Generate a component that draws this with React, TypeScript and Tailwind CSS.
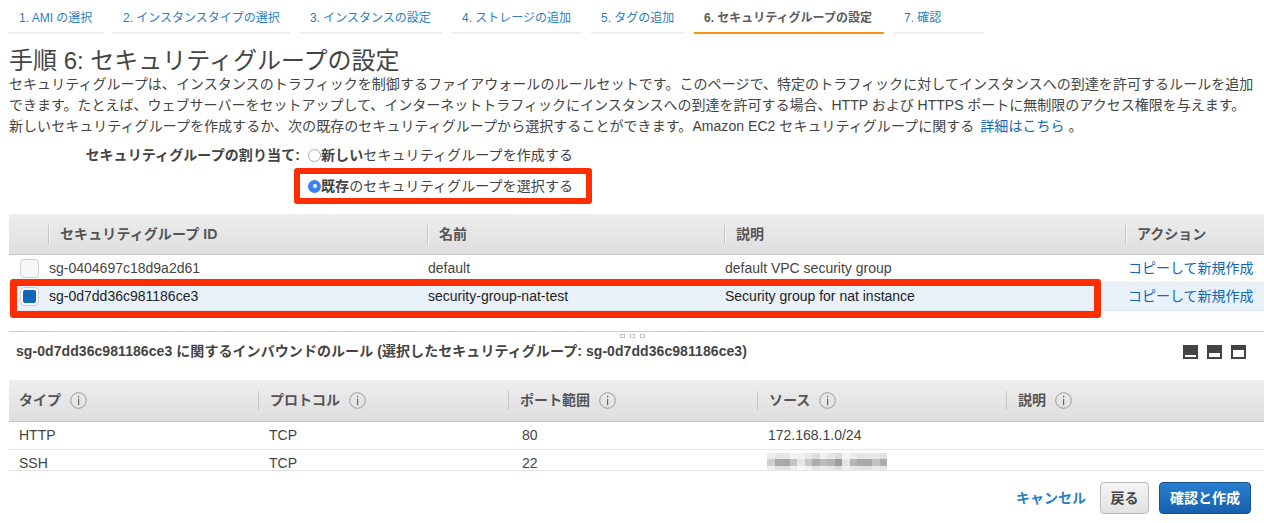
const font = "font-['Liberation_Sans','Noto_Sans_CJK_JP',sans-serif]";

const steps = [
  { label: '1. AMI の選択', w: 'w-[94px]' },
  { label: '2. インスタンスタイプの選択', w: 'w-[177px]' },
  { label: '3. インスタンスの設定', w: 'w-[142px]' },
  { label: '4. ストレージの追加', w: 'w-[129px]' },
  { label: '5. タグの追加', w: 'w-[93px]' },
  { label: '6. セキュリティグループの設定', w: 'w-[190px]', active: true },
  { label: '7. 確認', w: 'w-[90px]' },
];

const ruleCols = [
  { label: 'タイプ', w: 'w-[249px]' },
  { label: 'プロトコル', w: 'w-[250px]' },
  { label: 'ポート範囲', w: 'w-[249px]' },
  { label: 'ソース', w: 'w-[249px]' },
  { label: '説明', w: 'flex-1' },
];

const rules = [
  { type: 'HTTP', proto: 'TCP', port: '80', source: '172.168.1.0/24' },
  { type: 'SSH', proto: 'TCP', port: '22', source: '' },
];

// mosaic that hides the SSH source address
const blurRows = [
  { h: 'h-[6px]', cells: ['#ececec', '#e4e4e4', '#e6e6e6', '#f3f3f3', '#f1f1f1', '#e9e9e9', '#dedede', '#f2f2f2', '#e6e6e6', '#dcdcdc', '#f4f4f4', '#ebebeb', '#e4e4e4', '#e8e8e8', '#e8e8e8', '#e2e2e2'] },
  { h: 'h-[7px]', cells: ['#cfcfcf', '#a9a9a9', '#a6a6a6', '#c4c4c4', '#e6e6e6', '#c8c8c8', '#adadad', '#bcbcbc', '#b4b4b4', '#9d9d9d', '#e4e4e4', '#b6b6b6', '#a9a9a9', '#a9a9a9', '#c2c2c2', '#adadad'] },
  { h: 'h-[4px]', cells: ['#eeeeee', '#e2e2e2', '#e2e2e2', '#eeeeee', '#f8f8f8', '#f2f2f2', '#e4e4e4', '#ececec', '#e6e6e6', '#dedede', '#f0f0f0', '#e8e8e8', '#e4e4e4', '#e2e2e2', '#ececec', '#e4e4e4'] },
];

function InfoIcon() {
  return (
    <svg className="w-[17px] h-[17px] ml-[9px]" viewBox="0 0 17 17" fill="none">
      <circle cx="8.5" cy="8.5" r="7.8" stroke="#9a9a9a" strokeWidth="1" />
      <rect x="8" y="3.8" width="1.2" height="1.6" fill="#666" />
      <rect x="8" y="6.8" width="1.2" height="6.4" fill="#666" />
    </svg>
  );
}

function PanelIcon({ top, bottom }: { top: number; bottom: number }) {
  return (
    <svg className="w-[15px] h-[14px]" viewBox="0 0 15 14">
      <rect width="15" height="14" fill="#444" />
      <rect x="2" y={top} width="11" height={bottom} fill="#fff" />
    </svg>
  );
}

function HeadCell({ children, className }: { children: React.ReactNode; className?: string }) {
  return (
    <div className={`flex items-center h-[19px] ${className}`}>
      <div className="w-px h-[19px] bg-[#c6c6c6] border-r border-[#f5f5f5] box-content" />
      {children}
    </div>
  );
}

export default function App() {
  return (
    <div className={`${font} w-[1264px] h-[523px] overflow-hidden bg-white text-[#444] relative`}>
      <div className="flex gap-[10px] pl-[9px]">
        {steps.map((s) => (
          <div
            key={s.label}
            className={`${s.w} h-[34px] pt-[10px] pl-[10px] text-[12px] leading-[16px] whitespace-nowrap border-b-2 ${
              s.active ? 'border-[#f7960f] font-bold text-[#5c5c5c]' : 'border-[#eeeeee] text-[#2a7fc4]'
            }`}
          >
            {s.label}
          </div>
        ))}
      </div>

      <div className="pl-[9px]">
        <h1 className="text-[24px] leading-[30px] mt-[12px] text-[#444] font-normal whitespace-nowrap">手順 6: セキュリティグループの設定</h1>
        <div className="text-[14px] leading-[21px] -mt-[2px] whitespace-nowrap text-[#444]">
          <p className="tracking-[0.05px]">セキュリティグループは、インスタンスのトラフィックを制御するファイアウォールのルールセットです。このページで、特定のトラフィックに対してインスタンスへの到達を許可するルールを追加</p>
          <p>できます。たとえば、ウェブサーバーをセットアップして、インターネットトラフィックにインスタンスへの到達を許可する場合、HTTP および HTTPS ポートに無制限のアクセス権限を与えます。</p>
          <p className="tracking-[0.05px]">
            新しいセキュリティグループを作成するか、次の既存のセキュリティグループから選択することができます。Amazon EC2 セキュリティグループに関する <span className="text-[#1166bb] ml-[2px]">詳細はこちら</span> 。
          </p>
        </div>

        <div className="flex mt-[8px] text-[14px] leading-[20px] h-[62px] tracking-[0.1px]">
          <div className="w-[291px] text-right font-bold whitespace-nowrap">セキュリティグループの割り当て:</div>
          <div className="pl-[8px]">
            <div className="flex items-center h-[20px]">
              <span className="w-[13px] h-[13px] rounded-full border border-[#aaa] bg-white" />
              <span><b>新しい</b>セキュリティグループを作成する</span>
            </div>
            <div className="flex items-center h-[20px] mt-[11px]">
              <span className="w-[13px] h-[13px] rounded-full bg-[#3b82f0] flex items-center justify-center">
                <span className="w-[4px] h-[4px] rounded-full bg-white" />
              </span>
              <span><b>既存</b>のセキュリティグループを選択する</span>
            </div>
          </div>
        </div>
      </div>

      {/* security groups table */}
      <div className="pl-[9px] mt-[7px] text-[14px]">
        <div className="flex items-center h-[41px] bg-gradient-to-b from-[#eeeeee] to-[#dedede] border-b border-[#c6c6c6] font-bold text-[#555]">
          <HeadCell className="w-[379px] ml-[39px]"><span className="ml-[10px] tracking-[0.1px]">セキュリティグループ ID</span></HeadCell>
          <HeadCell className="w-[297px]"><span className="ml-[10px]">名前</span></HeadCell>
          <HeadCell className="w-[401px]"><span className="ml-[10px]">説明</span></HeadCell>
          <HeadCell className="flex-1"><span className="ml-[10px]">アクション</span></HeadCell>
        </div>
        <div className="flex items-center h-[28px] border-b border-[#e6e6e6]">
          <span className="w-[19px] h-[19px] ml-[11px] rounded-[4px] border border-[#cfcfcf] bg-[#f7f7f7]" />
          <span className="w-[379px] ml-[10px]">sg-0404697c18d9a2d61</span>
          <span className="w-[297px]">default</span>
          <span className="w-[403px]">default VPC security group</span>
          <span className="text-[#1166bb] whitespace-nowrap">コピーして新規作成</span>
        </div>
        <div className="flex items-center h-[28px] border-b border-[#dde5f0] bg-[#e9f1fb] text-[#222]">
          <span className="w-[19px] h-[19px] ml-[11px] rounded-[4px] border border-[#cfcfcf] bg-[#f7f7f7] flex items-center justify-center">
            <span className="w-[13px] h-[13px] rounded-[2px] bg-[#1166bb]" />
          </span>
          <span className="w-[379px] ml-[10px]">sg-0d7dd36c981186ce3</span>
          <span className="w-[297px]">security-group-nat-test</span>
          <span className="w-[403px]">Security group for nat instance</span>
          <span className="text-[#1166bb] whitespace-nowrap">コピーして新規作成</span>
        </div>
      </div>

      {/* selected group detail */}
      <div className="ml-[9px] mt-[20px] border-t border-[#cccccc] relative">
        <div className="absolute left-[611px] top-[2px] flex gap-[5px]">
          <span className="w-[5px] h-[4px] border border-[#c4c4c4]" />
          <span className="w-[5px] h-[4px] border border-[#c4c4c4]" />
          <span className="w-[5px] h-[4px] border border-[#c4c4c4]" />
        </div>
        <div className="flex items-center h-[39px] pl-[7px] pr-[18px] text-[14px] font-bold">
          <span className="whitespace-nowrap tracking-[0.07px]">sg-0d7dd36c981186ce3 に関するインバウンドのルール (選択したセキュリティグループ: sg-0d7dd36c981186ce3)</span>
          <div className="ml-auto flex gap-[9px]">
            <PanelIcon top={10} bottom={2} />
            <PanelIcon top={8} bottom={4} />
            <PanelIcon top={5} bottom={7} />
          </div>
        </div>
      </div>

      <div className="ml-[9px] mt-[9px] text-[14px]">
        <div className="flex items-center h-[42px] bg-gradient-to-b from-[#eeeeee] to-[#dedede] border-b border-[#c6c6c6] font-bold text-[#555]">
          {ruleCols.map((c, i) => (
            <div key={c.label} className={`${c.w} flex items-center h-[19px]`}>
              {i > 0 && <div className="w-px h-[19px] bg-[#c6c6c6]" />}
              <span className={i > 0 ? 'ml-[11px]' : 'ml-[10px]'}>{c.label}</span>
              <InfoIcon />
            </div>
          ))}
        </div>
        {rules.map((r, i) => (
          <div key={r.type} className={`flex items-start border-b border-[#e6e6e6] leading-[27px] ${i === 0 ? 'h-[28px]' : 'h-[21px] overflow-hidden'}`}>
            <span className="w-[250px] pl-[10px]">{r.type}</span>
            <span className="w-[250px] pl-[10px]">{r.proto}</span>
            <span className="w-[249px] pl-[13px]">{r.port}</span>
            {r.source ? (
              <span className="pl-[10px]">{r.source}</span>
            ) : (
              <div className="ml-[9px] mt-[3px]">
                {blurRows.map((row) => (
                  <div key={row.h} className={`flex ${row.h}`}>
                    {row.cells.map((c, j) => (
                      <span key={j} className="w-[7.5px] h-full" style={{ backgroundColor: c }} />
                    ))}
                  </div>
                ))}
              </div>
            )}
          </div>
        ))}
      </div>

      <div className="flex items-center justify-end mt-[11px] pr-[13px] text-[14px] font-bold">
        <span className="text-[#2a7fc4] mr-[14px]">キャンセル</span>
        <button className="w-[49px] h-[32px] rounded-[4px] border border-[#bbb] bg-gradient-to-b from-[#f4f4f4] to-[#e2e2e2] text-[#444] mr-[10px]">戻る</button>
        <button className="w-[92px] h-[32px] rounded-[4px] border border-[#15508f] bg-gradient-to-b from-[#2a7fcf] to-[#1560ad] text-white">確認と作成</button>
      </div>

      {/* annotation boxes drawn over the screenshot */}
      <div className="absolute left-[294px] top-[168px] w-[298px] h-[36px] border-[6px] border-[#ff2d00] rounded-[3px]" />
      <div className="absolute left-[10px] top-[279px] w-[1091px] h-[39px] border-[7px] border-[#ff2d00] rounded-[3px]" />
    </div>
  );
}
